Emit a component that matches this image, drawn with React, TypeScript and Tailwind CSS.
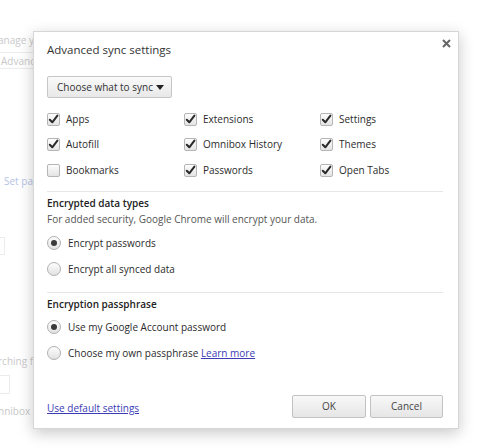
import React from "react";

const font = { fontFamily: '"Open Sans", "Noto Sans", "Liberation Sans", sans-serif' };

function Check({ checked }: { checked: boolean }) {
  return (
    <span className="relative inline-flex h-[13px] w-[13px] shrink-0 items-center justify-center rounded-[2px] border border-[#b5b5b5] bg-gradient-to-b from-[#fdfdfd] to-[#e4e4e4]">
      {checked && (
        <svg width="11" height="11" viewBox="0 0 11 11" className="absolute left-[0px] top-[0px]">
          <path d="M1.8 5.8 L4.3 8.3 L9.4 1.6" fill="none" stroke="#2a2a2a" strokeWidth="2" strokeLinecap="round" strokeLinejoin="round" />
        </svg>
      )}
    </span>
  );
}

function Radio({ checked }: { checked: boolean }) {
  return (
    <span className="inline-flex h-[14px] w-[14px] shrink-0 items-center justify-center rounded-full border border-[#b0b0b0] bg-gradient-to-b from-[#fdfdfd] to-[#e2e2e2]">
      {checked && <span className="h-[6px] w-[6px] rounded-full bg-[#3a3a3a]" />}
    </span>
  );
}

function CheckItem({ label, checked }: { label: string; checked: boolean }) {
  return (
    <div className="flex items-center gap-[6px]">
      <Check checked={checked} />
      <span>{label}</span>
    </div>
  );
}

function RadioItem({ label, checked, children }: { label: string; checked: boolean; children?: React.ReactNode }) {
  return (
    <div className="flex h-[26px] items-center gap-[7px] whitespace-nowrap">
      <Radio checked={checked} />
      <span>
        {label}
        {children}
      </span>
    </div>
  );
}

export default function App() {
  const rows: [string, boolean][][] = [
    [["Apps", true], ["Extensions", true], ["Settings", true]],
    [["Autofill", true], ["Omnibox History", true], ["Themes", true]],
    [["Bookmarks", false], ["Passwords", true], ["Open Tabs", true]],
  ];
  return (
    <div className="relative h-[448px] w-[483px] overflow-hidden bg-white text-[10px]" style={font}>
      {/* faded background page */}
      <div className="flex flex-col whitespace-nowrap text-[10px] text-[#c8c8c8]">
        <div className="mt-[32px] ml-[-2px] leading-[16px]">anage y</div>
        <div className="mt-[4px] ml-[-2px] flex h-[17px] w-[40px] items-center border border-[#ececec] pl-[2px] leading-[16px]">Advanc</div>
        <div className="mt-[104px] ml-[4px] leading-[16px] text-[#b5c3e6]">Set pag</div>
        <div className="mt-[48px] ml-[-4px] h-[18px] w-[9px] border border-[#ececec]" />
        <div className="mt-[98px] ml-[-2px] leading-[16px]">rching f</div>
        <div className="mt-[6px] ml-[-4px] h-[19px] w-[14px] border border-[#ececec]" />
        <div className="mt-[9px] ml-[-2px] leading-[16px]">nnibox i</div>
      </div>

      {/* dialog */}
      <div className="absolute left-[33px] top-[31px] flex h-[398px] w-[426px] flex-col border border-[#d6d6d6] bg-white pl-[13px] pr-[15px] text-[#2b2b2b] shadow-[0_4px_14px_rgba(0,0,0,0.22)]">
        <button className="absolute right-[6px] top-[5px] flex h-[12px] w-[12px] items-center justify-center">
          <svg width="9" height="9" viewBox="0 0 9 9">
            <path d="M1 1 L8 8 M8 1 L1 8" stroke="#666" strokeWidth="2" />
          </svg>
        </button>
        <div className="pt-[9px] text-[11.5px] leading-[18px] text-[#333]">Advanced sync settings</div>

        <div className="mt-[17px] flex h-[22px] w-[125px] items-center justify-between whitespace-nowrap rounded-[2px] border border-[#c6c6c6] bg-gradient-to-b from-[#fafafa] to-[#e8e8e8] pl-[9px] pr-[7px] text-[#333]">
          <span>Choose what to sync</span>
          <svg width="8" height="5" viewBox="0 0 8 5">
            <path d="M0 0 L8 0 L4 5 Z" fill="#222" />
          </svg>
        </div>

        <div className="mt-[8px] flex flex-col">
          {rows.map((r, i) => (
            <div key={i} className={`grid grid-cols-[137px_136px_1fr] items-center ${i === 0 ? "h-[26px]" : "h-[25.5px]"}`}>
              {r.map(([l, c]) => (
                <CheckItem key={l} label={l} checked={c} />
              ))}
            </div>
          ))}
        </div>

        <div className="mt-[8px] h-px w-full bg-[#e6e6e6]" />
        <div className="mt-[3px] font-semibold leading-[16px] text-[#222]">Encrypted data types</div>
        <div className="leading-[16px] text-[#555]">For added security, Google Chrome will encrypt your data.</div>
        <div className="mt-[3px]">
          <RadioItem label="Encrypt passwords" checked />
          <RadioItem label="Encrypt all synced data" checked={false} />
        </div>

        <div className="mt-[10px] h-px w-full bg-[#e6e6e6]" />
        <div className="mt-[3px] font-semibold leading-[16px] text-[#222]">Encryption passphrase</div>
        <div className="mt-[2px]">
          <RadioItem label="Use my Google Account password" checked />
          <RadioItem label="Choose my own passphrase " checked={false}>
            <a className="text-[#3b3bb5] underline">Learn more</a>
          </RadioItem>
        </div>

        <div className="mt-auto mb-[10px] flex items-center justify-between">
          <a className="pt-[4px] text-[#3b3bb5] underline">Use default settings</a>
          <div className="flex gap-[4px]">
            <button className="h-[23px] w-[74px] rounded-[2px] border border-[#c2c2c2] bg-gradient-to-b from-[#f8f8f8] to-[#e6e6e6] text-[#444]">OK</button>
            <button className="h-[23px] w-[73px] rounded-[2px] border border-[#c2c2c2] bg-gradient-to-b from-[#f8f8f8] to-[#e6e6e6] text-[#444]">Cancel</button>
          </div>
        </div>
      </div>
    </div>
  );
}
